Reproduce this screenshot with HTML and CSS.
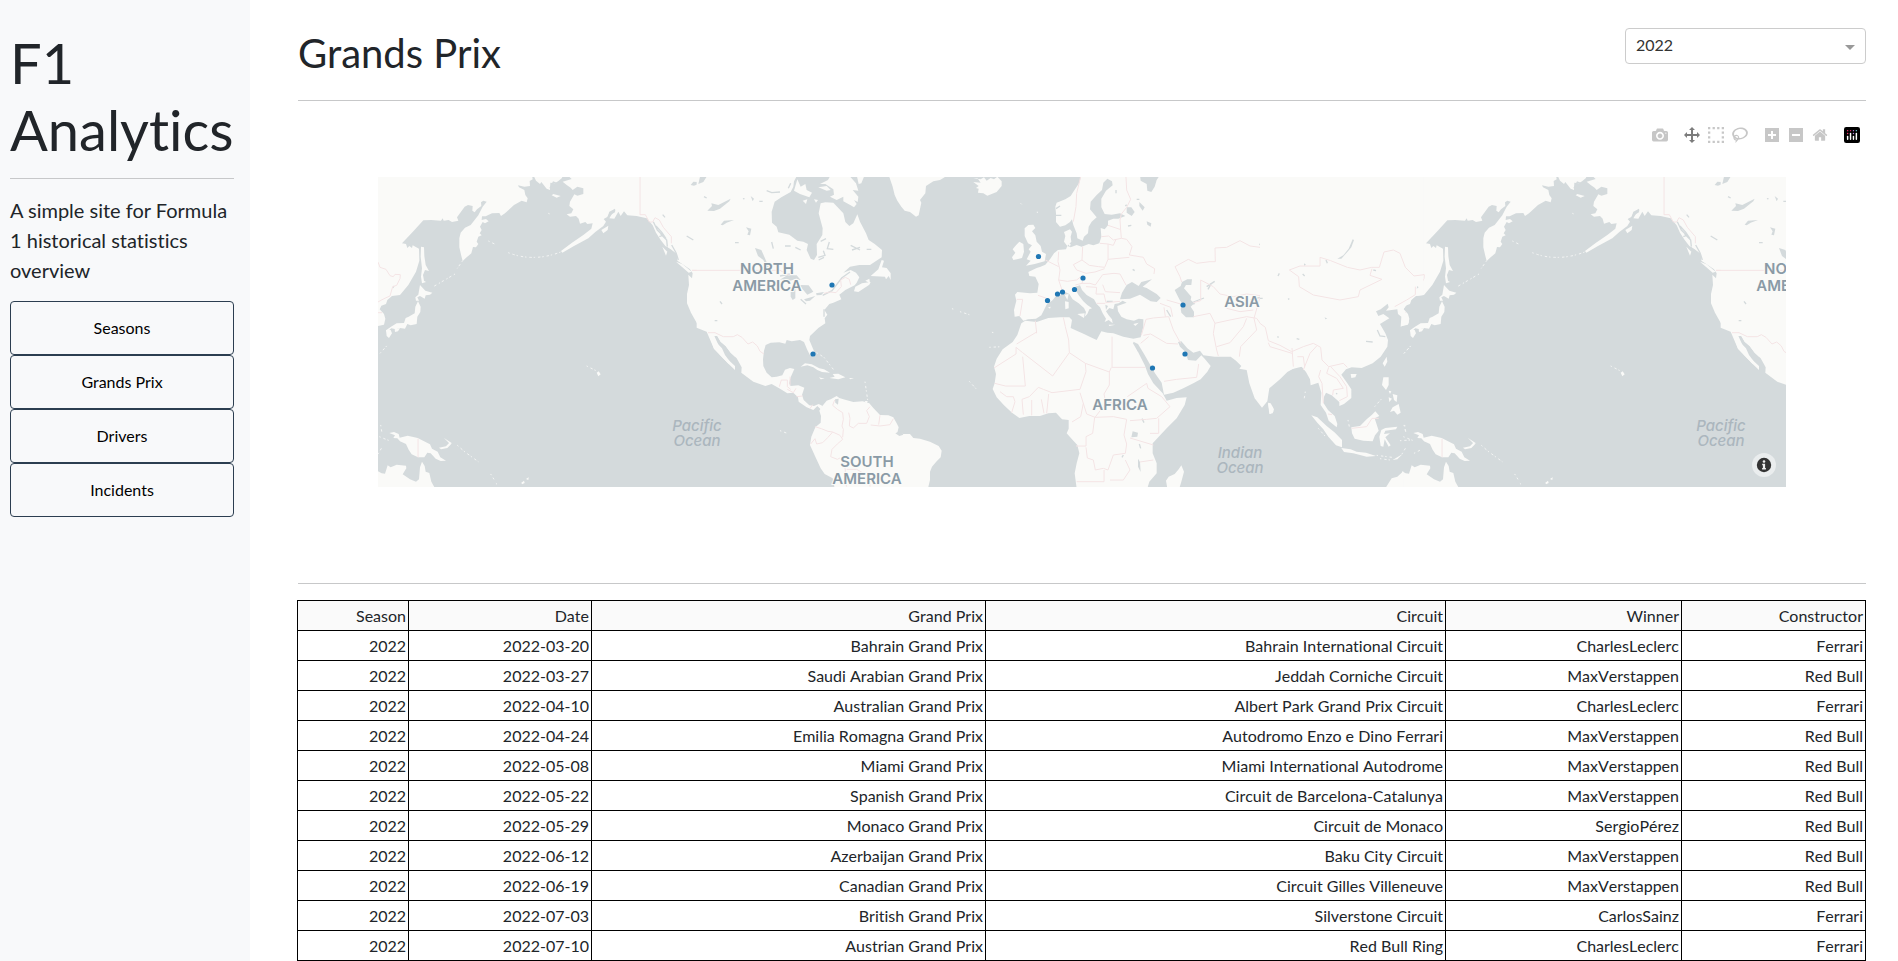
FILE: index.html
```html
<!DOCTYPE html>
<html lang="en">
<head>
<meta charset="utf-8">
<meta name="viewport" content="width=device-width, initial-scale=1">
<title>F1 Analytics</title>
<link rel="stylesheet" href="styles.css">
</head>
<body>
<div class="layout">
  <aside class="sidebar">
    <h1 class="brand">F1 Analytics</h1>
    <hr class="rule">
    <p class="lead">A simple site for Formula 1 historical statistics overview</p>
    <nav class="nav">
      <a class="nav-link" href="#seasons">Seasons</a>
      <a class="nav-link" href="#grands-prix">Grands Prix</a>
      <a class="nav-link" href="#drivers">Drivers</a>
      <a class="nav-link" href="#incidents">Incidents</a>
    </nav>
  </aside>
  <main class="content">
    <header class="page-head">
      <h2 class="page-title">Grands Prix</h2>
      <div class="picker">
        <select class="picker-select" aria-label="Season">
          <option>2022</option>
        </select>
        <span class="picker-arrow"></span>
      </div>
    </header>
    <hr class="rule">
    <section class="graph">
      <div class="modebar">
        <div class="modebar-group">
          <button class="tool" aria-label="Download plot"><svg viewBox="0 0 1000 1000"><path transform="matrix(1 0 0 -1 0 850)" d="m500 450c-83 0-150-67-150-150 0-83 67-150 150-150 83 0 150 67 150 150 0 83-67 150-150 150z m400 150h-120c-16 0-34 13-39 29l-31 93c-6 15-23 28-40 28h-340c-16 0-34-13-39-28l-31-94c-6-15-23-28-40-28h-120c-55 0-100-45-100-100v-450c0-55 45-100 100-100h800c55 0 100 45 100 100v450c0 55-45 100-100 100z m-400-550c-138 0-250 112-250 250 0 138 112 250 250 250 138 0 250-112 250-250 0-138-112-250-250-250z m365 380c-19 0-35 16-35 35 0 19 16 35 35 35 19 0 35-16 35-35 0-19-16-35-35-35z"/></svg></button>
        </div>
        <div class="modebar-group">
          <button class="tool tool-active" aria-label="Pan"><svg viewBox="0 0 1000 1000"><path transform="matrix(1 0 0 -1 0 850)" d="m1000 350l-187 188 0-125-250 0 0 250 125 0-188 187-187-187 125 0 0-250-250 0 0 125-188-188 186-187 0 125 252 0 0-250-125 0 187-188 188 188-125 0 0 250 250 0 0-126 187 188z"/></svg></button>
          <button class="tool" aria-label="Box select"><svg viewBox="0 0 1000 1000"><path transform="matrix(1 0 0 -1 0 850)" d="m0 850l0-143 143 0 0 143-143 0z m286 0l0-143 143 0 0 143-143 0z m285 0l0-143 143 0 0 143-143 0z m286 0l0-143 143 0 0 143-143 0z m-857-286l0-143 143 0 0 143-143 0z m857 0l0-143 143 0 0 143-143 0z m-857-285l0-143 143 0 0 143-143 0z m857 0l0-143 143 0 0 143-143 0z m-857-286l0-143 143 0 0 143-143 0z m286 0l0-143 143 0 0 143-143 0z m285 0l0-143 143 0 0 143-143 0z m286 0l0-143 143 0 0 143-143 0z"/></svg></button>
          <button class="tool" aria-label="Lasso select"><svg viewBox="0 0 1031 1000"><path transform="matrix(1 0 0 -1 0 850)" d="m1018 538c-36 207-290 336-568 286-277-48-473-256-436-463 10-57 36-108 76-151-13-66 11-137 68-183 34-28 75-41 114-42l-55-70 0 0c-2-1-3-2-4-3-10-14-8-34 5-45 14-11 34-8 45 4 1 1 2 3 2 5l0 0 113 140c16 11 31 24 45 40 4 3 6 7 8 11 48-3 100 0 151 9 278 48 473 255 436 462z m-624-379c-80 14-149 48-197 96 42 42 109 47 156 9 33-26 47-66 41-105z m-187-74c-19 16-33 37-39 60 50-32 109-55 174-68-42-25-95-24-135 8z m360 75c-34-7-69-9-102-8 8 62-16 128-68 170-73 59-175 54-244-5-9 20-16 40-20 61-28 159 121 317 333 354s407-60 434-217c28-159-121-318-333-355z"/></svg></button>
        </div>
        <div class="modebar-group">
          <button class="tool" aria-label="Zoom in"><svg viewBox="-62 0 1000 1000"><path transform="matrix(1 0 0 -1 0 850)" d="m1 787l0-875 875 0 0 875-875 0z m687-500l-187 0 0-187-125 0 0 187-188 0 0 125 188 0 0 187 125 0 0-187 187 0 0-125z"/></svg></button>
          <button class="tool" aria-label="Zoom out"><svg viewBox="-62 0 1000 1000"><path transform="matrix(1 0 0 -1 0 850)" d="m0 788l0-876 875 0 0 876-875 0z m688-500l-500 0 0 125 500 0 0-125z"/></svg></button>
          <button class="tool" aria-label="Reset view"><svg viewBox="-36 0 1000 1000"><path transform="matrix(1 0 0 -1 0 850)" d="m786 296v-267q0-15-11-26t-25-10h-214v214h-143v-214h-214q-15 0-25 10t-11 26v267q0 1 0 2t0 2l321 264 321-264q1-1 1-4z m124 39l-34-41q-5-5-12-6h-2q-7 0-12 3l-386 322-386-322q-7-4-13-4-7 2-12 7l-35 41q-4 5-3 13t6 12l401 334q18 15 42 15t43-15l136-114v109q0 8 5 13t13 5h107q8 0 13-5t5-13v-227l122-102q5-5 6-12t-4-13z"/></svg></button>
        </div>
        <div class="modebar-group">
          <a class="tool" href="#plotly" aria-label="Plotly"><svg viewBox="0 0 132 132"><rect width="132" height="132" rx="18" fill="#000"/><g fill="#fff"><rect x="24" y="72" width="12" height="36" rx="6"/><rect x="48" y="48" width="12" height="60" rx="6"/><rect x="72" y="72" width="12" height="36" rx="6"/><rect x="96" y="48" width="12" height="60" rx="6"/></g><g fill="#f0326e"><circle cx="30" cy="30" r="6"/><circle cx="30" cy="54" r="6"/><circle cx="54" cy="30" r="6"/></g><g fill="#b98ae0"><circle cx="78" cy="30" r="6"/><circle cx="78" cy="54" r="6"/></g><circle cx="102" cy="30" r="6" fill="#6dd5e0"/></svg></a>
        </div>
      </div>
      <div class="map">
        <svg class="map-canvas" viewBox="378 177 1408 310" preserveAspectRatio="xMidYMid slice" role="img" aria-label="Map of circuits">
          <defs>
            <g id="world">
              <!-- Pacific rim -->
              <g transform="translate(370 170) scale(.333333)">
                <g class="land">
                  <path d="M24,15L486,15 488,28 479,33 480,48 463,50 444,46 447,52 463,60 466,75 473,85 470,97 455,92 432,105 405,130 393,138 388,129 366,130 347,139 336,139 335,150 348,147 356,154 345,160 338,156 330,170 335,180 329,190 335,196 325,200 320,215 325,222 318,232 309,231 304,250 290,262 278,273 274,258 268,232 268,205 272,188 285,173 302,165 325,136 338,110 350,95 340,92 333,97 334,108 321,118 314,127 307,122 308,108 294,105 284,110 261,142 265,152 246,156 236,150 221,152 218,145 213,152 184,150 160,151 130,184 96,220 108,222 112,234 118,228 126,234 128,226 147,236 148,272 138,305 115,345 90,375 66,378 52,390 48,402 34,407 29,418 42,432 46,446 42,464 24,468Z"/>
                  <path d="M490,15L498,32 510,42 514,36 530,56 540,60 541,38 555,40 565,33 576,24 578,15Z"/>
                  <path d="M592,15L605,27 578,35 590,45 602,53 608,60 622,50 640,55 640,72 622,77 613,73 600,95 598,108 610,118 604,130 590,133 600,140 618,138 626,146 630,161 646,156 652,162 668,160 664,176 640,195 606,218 573,243 577,248 612,228 655,205 676,186 700,168 708,155 701,147 713,140 718,125 735,116 736,122 727,130 718,145 733,146 745,125 752,138 762,124 772,136 800,138 830,145 848,166 858,188 872,210 886,228 900,236 921,252 922,272 940,284 960,298 968,310 966,325 955,314 957,345 951,372 951,400 963,428 985,467 1010,479 1016,492 1032,536 1055,560 1076,582 1095,600 1095,15Z"/>
                  <path d="M153,230L162,232 163,258 167,285 177,303 165,300 159,315 162,332 168,336 156,340 153,320 156,295 152,260Z"/>
                  <path d="M150,345L166,362 187,368 180,374 167,376 164,386 150,378 142,382 147,392 138,392 136,382 145,374Z"/>
                  <path d="M144,394L152,410 151,426 142,440 140,462 122,466 112,462 105,476 90,474 78,478 64,475 50,487 48,481 63,470 80,460 102,459 107,444 116,440 134,430 136,410Z"/>
                  <path d="M48,480L62,480 66,490 57,504 50,498ZM74,478L90,474 84,484 75,486Z"/>
                  <path d="M58,789L72,786 86,792 89,803 113,797 143,804 180,823 186,836 203,845 211,862 228,872 212,873 197,866 182,850 172,848 163,862 144,862 125,853 116,839 108,822 90,814 82,805 70,804 75,796Z"/>
                  <path d="M207,833L228,829 240,816 243,823 232,834 213,838ZM222,804L246,820 240,822Z"/>
                  <path d="M24,904L35,910 45,911 53,886 62,892 80,884 108,887 109,895 98,913 120,928 138,935 147,928 150,892 156,875 164,888 167,905 178,909 184,935 195,955 24,955Z"/>
                  <path d="M877,230L892,245 888,257ZM918,275L938,283 965,305 956,308ZM694,180L715,167 713,180 700,190Z"/>
                  <path d="M545,76L550,72 572,78 560,83ZM680,608L686,604 692,613 685,619ZM454,938L462,932 464,939 456,943ZM468,927L476,922 475,930Z"/>
                </g>
                <path class="isles" d="M278,272L262,295M255,312L190,350M355,213L378,224M415,248Q490,278 575,245M262,826L285,846 325,875M362,912L372,928M378,940L386,948M650,588L678,602M30,550L50,528M32,765L36,790M28,800L58,812M24,852L36,832M535,130L545,134"/>
                <path class="water" d="M1033,498L1042,498 1052,515 1067,528 1082,548 1100,565 1115,590 1115,600 1095,588 1065,560 1050,535ZM1012,122L1026,108 1024,98 1045,104 1078,85 1075,96 1050,118 1030,122ZM962,45L970,35 980,36 992,22 1008,20 1003,35 985,42 972,47ZM1002,78L1010,80 1005,84ZM1048,392L1056,396 1054,402ZM1052,162L1072,150 1080,145 1064,165Z"/>
                <path class="creek" d="M710,158L716,136 735,124M850,155L862,180 878,196 868,200M858,168L876,188 888,206M872,192L890,210 892,230M905,225L918,248 925,270M890,232L905,250M950,198L970,210M878,134L885,142M540,55L550,36 560,40M1036,452L1042,452M68,354L72,348"/>
                <path class="border" d="M24,276L30,292 48,298 60,317 70,320 75,313 91,314 90,326 80,346 68,350 60,378 42,386 24,396M24,428L36,428M810,15V134L826,134 838,156 848,156 855,143 868,150 880,172 904,200 904,220M966,301H1100M144,806V862M1018,488L1032,488 1060,500 1100,500"/>
              </g>
              <!-- Americas, Greenland and Iceland -->
              <g transform="translate(700 170) scale(.333333)">
                <g class="land">
                  <path d="M-10,15L-10,473 20,485 42,536 65,560 86,582 90,575 75,555 66,535 50,518 42,498 52,498 62,515 77,528 92,548 110,565 125,592 124,608 160,635 196,648 215,642 240,656 262,670 280,668 294,682 296,695 320,712 340,720 352,708 362,718 368,708 356,702 342,708 328,706 311,690 306,675 313,653 295,646 272,648 267,640 272,622 283,597 270,594 255,599 247,616 230,620 215,622 200,608 190,588 189,568 192,542 197,525 212,518 238,517 256,521 260,510 275,514 300,510 312,516 322,540 330,556 342,560 344,548 328,510 330,498 355,474 376,460 374,445 382,434 373,420 388,402 400,398 424,388 418,374 436,360 464,346 470,338 478,322 468,308 452,300 430,308 450,290 478,285 510,285 545,262 546,240 524,222 506,210 498,190 480,155 472,133 460,160 448,168 436,156 430,130 400,98 376,97 362,100 356,130 368,175 367,195 350,222 351,255 342,270 332,266 320,240 324,222 310,215 292,212 268,194 235,187 230,170 216,158 215,125 224,95 244,82 272,66 280,50 282,34 292,15Z"/>
                  <path d="M292,28L302,50 316,42 320,60 336,68 328,82 300,72 282,62ZM308,92L322,88 318,102ZM342,88L354,90 348,98ZM355,52L380,48 392,60 380,62ZM392,15L384,30 360,42 376,42 400,58 402,74 390,80 410,90 430,80 430,94 452,106 462,112 470,102 462,90 473,96 475,80 458,60 475,62 468,40 446,15ZM470,15L476,42 484,40 494,15Z"/>
                  <path d="M545,270L535,298 512,318 555,320 558,328 566,318 572,330 572,310 560,294 546,292 552,272Z"/>
                  <path d="M466,350L486,340 512,336 508,344 475,366 462,364ZM496,332L508,326 510,340Z"/>
                  <path d="M566,15L578,50 584,75 592,92 604,110 614,122 630,126 648,140 656,136 664,98 660,90 676,70 678,48 700,34 720,30 745,15Z"/>
                  <path d="M820,24L832,24 842,38 820,36 836,48 828,54 836,56 834,68 850,70 862,77 890,66 905,48 905,34 892,20 882,28 872,24 860,32 852,22 842,28Z"/>
                  <path d="M302,590L315,580 335,583 358,595 372,598 390,608 366,606 352,600 340,592 322,586ZM398,612L415,611 436,622 415,628 388,624 404,620ZM357,622L374,626 362,628ZM448,624L462,625 450,628ZM494,693L503,693 500,702Z"/>
                  <path d="M364,712L380,692 392,688 410,678 418,684 430,688 460,696 488,694 508,700 520,714 540,735 565,736 580,742 590,760 596,772 592,788 610,792 630,792 640,804 660,806 690,815 716,828 725,842 722,862 710,874 696,890 690,905 690,930 684,955 404,955 398,925 374,912 362,895 346,860 330,825 334,800 346,772 362,758 363,738 358,722Z"/>
                </g>
                <path class="isles" d="M350,548L372,562 400,598M495,635L503,690M756,416L762,418M780,425L808,434M868,532L905,530M808,634L828,656M876,487L882,488M240,782L262,790M962,100L968,106M1012,125L1012,136"/>
                <g class="water">
                  <path d="M238,330L262,316 290,316 302,330 284,328 262,335 248,328ZM272,358L286,348 286,385 278,390 272,380ZM300,345L326,346 340,365 322,374 308,358ZM312,388L346,378 330,392 318,394ZM348,370L372,366 364,375 350,376ZM165,234L184,240 192,258 206,290 200,292 190,270 174,258ZM22,122L36,108 34,100 55,105 92,86 88,94 60,116 42,123ZM62,164L72,152 102,150 80,158 68,166ZM138,172L154,176 150,196 142,194 146,184ZM152,78L162,86 158,94ZM405,688L416,686 414,704 406,698ZM0,20H20L10,36 -5,42ZM586,790L602,782 610,794 598,798ZM128,84L134,84 132,90ZM178,92H188V96H178Z"/>
                </g>
                <path class="creek" d="M12,80L20,84M200,62L215,68 240,66M105,218H116M215,216L220,236M255,228L272,228M286,232L302,240M355,262L375,256 370,242M362,214L378,206M388,216L382,236 400,238M452,226L480,240M456,240L480,232M60,394L66,402M44,452H52M368,376L396,362 425,324 450,306M372,418V440M500,238H514M265,55L272,40M356,270L372,262M240,318L270,312M302,388L318,402"/>
                <path class="border" d="M-24,301H240L268,316M372,370L390,366 408,368 424,350 422,330 436,322 448,328 452,344M24,488L45,488 70,500 100,500 112,494 126,502 144,522 158,516 172,528 180,544 192,552M238,650L244,630 262,630 262,650 272,658M270,620V646M262,658L280,668 288,655M290,680L308,678M338,704L330,716M404,690L398,706 412,718 428,728 430,748 426,768 430,778 428,802M446,728L450,745 448,768 460,774 475,760 500,760 508,740 500,722 510,710M512,765L540,768 570,764 580,746M540,736L536,764M345,770L364,776 384,784 398,786 384,802 368,818 350,822 345,806 332,822M398,786L420,796 428,808 412,822 396,838 392,860 412,868 420,864M430,870L436,900 434,930 440,950M440,898L470,898 508,920 510,950"/>
              </g>
            </g>
          </defs>
          <rect x="378" y="177" width="1408" height="310" fill="#d4dadc"/>
          <use href="#world"/>
          <use href="#world" x="1024"/>
          <!-- Europe, Africa, western and southern Asia -->
          <g transform="translate(980 170) scale(.333333)">
            <g class="land">
              <path d="M304,15L298,38 285,58 272,78 256,88 230,98 226,110 228,130 228,156 240,170 256,166 270,156 276,148 280,165 290,190 292,205 308,212 312,200 324,190 326,170 335,155 350,142 340,130 330,118 332,95 350,75 366,60 370,38 382,26 396,34 398,46 378,62 364,86 364,112 374,132 395,134 420,130 436,138 415,146 400,146 384,152 384,166 374,178 362,174 364,200 358,220 340,226 326,222 305,230 290,225 272,232 262,228 252,215 256,198 252,186 270,178 276,185 272,200 274,215 262,228 258,238 234,240 222,250 210,268 196,284 182,290 170,294 145,306 148,318 166,320 176,342 172,368 150,370 112,366 105,374 109,392 102,420 104,440 118,438 130,452 144,448 168,446 184,436 192,420 202,400 216,392 228,378 242,376 256,366 268,372 278,388 296,400 312,414 318,426 314,440 322,432 328,418 336,415 322,405 310,394 296,376 288,362 286,350 300,346 306,360 320,375 342,388 350,402 360,412 368,430 378,446 374,456 386,450 398,460 396,448 386,436 378,424 388,414 400,418 404,402 416,400 428,392 440,398 412,408 414,424 424,440 440,448 462,452 476,446 490,448 490,470 482,502 460,506 430,500 400,490 382,488 364,484 350,510 332,502 312,492 290,482 272,474 276,450 268,442 240,442 205,444 170,456 136,452 124,460 112,495 98,516 68,538 50,566 42,590 48,612 44,640 38,657 50,682 72,706 96,728 118,744 148,738 180,738 205,730 228,728 246,748 266,750 266,776 260,790 276,808 292,825 298,850 290,880 284,910 290,955 502,955 508,935 530,910 530,880 518,850 518,820 560,775 590,745 614,705 620,682 590,684 560,692 548,670 520,640 504,612 494,585 476,550 464,524 460,515 474,522 494,555 508,580 525,610 545,638 552,674 580,668 610,655 640,640 662,628 682,605 692,588 674,566 664,556 648,572 624,570 616,545 600,530 594,516 604,514 622,535 640,548 660,542 670,556 704,560 752,560 768,572 784,588 778,596 800,600 808,640 824,685 846,713 862,694 868,655 900,628 922,606 950,590 970,590 970,15Z"/>
              <path d="M145,165L160,164 166,174 156,184 166,196 170,215 182,228 186,245 198,252 194,274 164,282 138,287 152,272 140,268 152,245 146,238 156,226 144,220 134,198 134,175ZM104,230L118,215 130,222 132,245 126,264 100,270 96,262 106,248 98,238ZM254,374L266,372 262,390ZM255,394L266,396 266,415 256,418ZM292,432L314,430 312,444ZM386,464L406,464 388,468ZM460,462L476,458 466,468ZM204,412L212,410 210,416ZM262,218L272,222 270,230Z"/>
              <path d="M864,698L872,700 882,718 878,730 868,732ZM604,886L612,905 604,935 598,955 562,955 558,932 566,920 584,912 596,898Z"/>
            </g>
            <g class="water">
              <path d="M456,336L440,345 426,368 420,388 450,386 480,374 512,394 530,396 542,384 530,372 500,354 488,350 516,328 484,336 476,348ZM606,336L622,328 636,328 634,345 618,345 612,355 634,380 632,390 646,402 638,404 632,410 642,425 642,442 618,442 604,428 602,416 608,405 598,388 584,360 602,348ZM480,15L482,32 500,42 502,62 514,66 524,50 530,30 540,15ZM440,112L454,112 464,126 455,138 440,128ZM478,96L494,112 488,122 478,108ZM500,154L514,160 512,170 502,164ZM458,784L474,788 472,800 454,802ZM474,866L480,876 482,906 474,890ZM376,404L384,408 378,420ZM600,205Z"/>
            </g>
            <path class="creek" d="M560,420L572,440M680,350L704,334M684,358L694,340M896,296L912,308M838,224L850,218M886,342L898,336M840,382L812,390M478,822L482,835M430,855L426,862M458,298L464,302M640,396L672,384M486,746L492,758M380,394H398M240,108L228,116M226,136L244,136M968,285L980,280M1036,442L1042,444M460,518L476,545M436,108L440,104M408,60V70M470,88H478M444,168L454,166"/>
            <path class="border" d="M302,20L290,70 288,110 280,155M438,20L440,60 452,88 440,112 424,132 420,150 422,180 424,205 440,208 456,230 448,255 490,262 500,282 524,296 522,312M384,166L420,178M364,200L386,198 400,210 424,205M308,230L306,270 328,286 356,290 374,292 384,268 384,222 360,220M384,222L400,226 408,208M384,268L448,262M306,270L280,284 290,300 318,310 345,306 374,296M236,245L234,275 240,300 236,330 262,334 290,330 300,322M196,270L236,290M236,330L246,360M286,345L306,340 312,318M306,340L330,340 346,345 368,314 402,310 420,312 438,345M318,350L350,352 348,372 372,372 378,398 420,394M368,344L376,365 420,368M350,400L376,400M200,385L174,376M110,388H128L120,438M250,442L256,470 266,510 268,548 218,618 128,548 108,532 108,552 42,594M166,452L170,490M170,486L110,522M128,560L136,648H76L44,640M268,548L316,580 318,605 300,658 216,668 190,658 175,652 148,680 126,688 130,734M396,500V592H496M388,605V645L372,672 378,700 345,742 320,732 300,668M394,592L388,606 316,580M60,665L80,680 100,680 105,695 95,728M155,690V736M184,688L192,730M206,672L200,730M310,700L302,740 276,756M344,742L338,790 318,800 318,828H288M345,742L400,740 440,748 432,795 440,822 436,850 400,855 384,900 370,895 346,900 340,870 322,864 318,832M378,700L400,698 M442,680L500,640 504,655 545,680 570,710 530,745 500,748 450,752M536,745V790L510,790M450,804L520,825M372,900V935L290,935M436,870L450,900 430,930 390,930M480,876L520,870M484,496L498,448 520,444 566,440 580,480 602,520M490,496L512,492 560,520 594,522M506,500L482,520M540,400L572,412 578,440M556,440L552,412M560,390L602,402M640,440L690,430 705,460 700,490 710,540 715,558M640,398L662,392V330L700,350 720,372 760,380 800,372 866,380M704,460L750,450 800,440 830,445 862,490 860,515 920,545 1000,540M778,560L782,530 830,480 822,445 840,382 870,378 870,350 900,325 930,300 900,280 868,270 840,232 810,228 780,212 740,232 705,234 706,275 690,275 650,280 625,268 585,290 600,320 605,336M930,300L1010,290 1030,262 1080,280M930,300L960,320 960,350 1000,375 1080,392M710,530L750,518 790,470 800,445M740,415L780,425 820,420M552,634L590,628 650,622 656,582M936,540L940,590M960,560L1000,520 1020,540"/>
          </g>
          <!-- Eastern Asia and the Indonesian islands -->
          <g transform="translate(1260 170) scale(.333333)">
            <g class="land">
              <path d="M0,15L0,650 30,645 52,625 85,600 125,590 138,606 150,628 152,646 175,638 184,668 182,705 198,728 206,752 230,772 232,762 224,738 204,720 190,698 192,680 198,668 215,676 238,696 238,708 252,702 274,684 274,658 262,640 244,614 258,598 275,592 305,594 338,580 362,560 382,530 384,510 376,490 360,462 388,445 370,432 355,438 348,424 362,418 383,401 386,412 378,422 412,418 414,432 424,440 422,470 446,460 447,444 430,418 440,405 452,390 466,378 490,375 490,15Z"/>
              <path d="M272,612L290,612 286,622 274,624ZM380,560L382,575 374,590 368,580ZM370,622L386,622 386,645 378,660 366,645ZM398,712L416,702 422,728 412,734 402,722 390,726ZM154,736L172,742 200,768 225,788 246,810 246,832 228,826 205,800 190,778 172,758ZM244,834L272,838 290,845 318,848 348,858 320,860 280,850 252,846ZM274,772L300,768 320,748 336,734 346,724 358,738 344,745 356,782 345,796 338,814 310,812 284,806 276,790ZM364,780L376,774 412,770 408,778 376,782 372,792 390,790 376,802 392,826 386,830 374,808 370,830 362,828 358,800ZM24,700L38,712 40,725 30,732ZM376,955L395,925 412,920 430,904 430,955Z"/>
              <path d="M386,662L394,664 390,672ZM398,672L412,676 410,696 402,690ZM386,682L396,686 388,696ZM398,870L428,852 412,868Z"/>
            </g>
            <path class="isles" d="M344,710L366,685M350,856L396,862M360,866L390,870M420,812L454,810M432,765L438,790M136,665L132,690M175,775L200,804M432,550L450,530M462,850L485,838M264,750L268,770"/>
            <path class="water" d="M278,208L282,210 274,232 262,246 244,266 232,266 250,256 266,236ZM194,442L202,446 196,448ZM472,348L476,352 470,356ZM132,280L138,284 132,288Z"/>
            <path class="creek" d="M340,300L348,302M198,270L202,280M128,312L134,318M110,506L118,508M52,500L56,502M352,480L360,498 376,500M318,514L338,516M228,670L232,672M58,310L54,318M0,385H8M84,388L88,386"/>
            <path class="border" d="M88,300L120,288 180,288 180,262 212,272 262,292 300,300 335,292 358,292 372,246 400,240 420,250 436,292 462,318 492,314M88,300L116,320 118,350 160,375 240,390 295,380 300,360 366,328 330,316 336,296M404,410L440,390 466,374 466,350M0,460L16,472 25,512 60,526 95,545 130,530 160,520 182,532 186,570 206,590 250,580 262,592M25,518L30,530 96,550M96,534L100,590M112,560L130,560 134,592M130,600L150,550 170,528M182,600L176,620 186,640 190,700M206,592L200,610 230,625 250,655 220,660 218,676M212,590L240,620 260,650 262,680 238,692M275,775L320,770 336,745 356,745M204,732L216,734"/>
          </g>
          <g class="place">
            <text x="767" y="274">NORTH</text><text x="767" y="291">AMERICA</text>
            <text x="1791" y="274">NORTH</text><text x="1791" y="291">AMERICA</text>
            <text x="867" y="467">SOUTH</text><text x="867" y="484">AMERICA</text>
            <text x="1120" y="410">AFRICA</text><text x="1242" y="307">ASIA</text>
          </g>
          <g class="ocean">
            <text x="697" y="431">Pacific</text><text x="697" y="446">Ocean</text>
            <text x="1721" y="431">Pacific</text><text x="1721" y="446">Ocean</text>
            <text x="1240" y="458">Indian</text><text x="1240" y="473">Ocean</text>
          </g>
          <g fill="#1f77b4">
            <circle cx="832" cy="285" r="2.6"/><circle cx="813" cy="354" r="2.6"/><circle cx="1038.500" cy="256.500" r="2.6"/>
            <circle cx="1083" cy="278" r="2.6"/><circle cx="1047.500" cy="300.500" r="2.6"/><circle cx="1057.500" cy="294" r="2.6"/>
            <circle cx="1062.500" cy="292" r="2.6"/><circle cx="1074.500" cy="289.500" r="2.6"/><circle cx="1183" cy="305" r="2.6"/>
            <circle cx="1185" cy="354" r="2.6"/><circle cx="1152.500" cy="368" r="2.6"/>
          </g>
        </svg>
        <button class="map-info" aria-label="Map attribution"><svg viewBox="0 0 24 24"><circle cx="12" cy="12" r="7.200" fill="#333"/><circle cx="12" cy="8.500" r="1.300" fill="#eee"/><path d="M10.200 10.800h2.900v4.200h.8v1.400h-3.800V15h.8v-2.800h-.7z" fill="#eee"/></svg></button>
      </div>
    </section>
    <hr class="rule">
    <table class="results">
      <colgroup><col class="c-season"><col class="c-date"><col class="c-gp"><col class="c-circuit"><col class="c-winner"><col class="c-team"></colgroup>
      <thead><tr><th>Season</th><th>Date</th><th>Grand Prix</th><th>Circuit</th><th>Winner</th><th>Constructor</th></tr></thead>
      <tbody>
        <tr><td>2022</td><td>2022-03-20</td><td>Bahrain Grand Prix</td><td>Bahrain International Circuit</td><td>CharlesLeclerc</td><td>Ferrari</td></tr>
        <tr><td>2022</td><td>2022-03-27</td><td>Saudi Arabian Grand Prix</td><td>Jeddah Corniche Circuit</td><td>MaxVerstappen</td><td>Red Bull</td></tr>
        <tr><td>2022</td><td>2022-04-10</td><td>Australian Grand Prix</td><td>Albert Park Grand Prix Circuit</td><td>CharlesLeclerc</td><td>Ferrari</td></tr>
        <tr><td>2022</td><td>2022-04-24</td><td>Emilia Romagna Grand Prix</td><td>Autodromo Enzo e Dino Ferrari</td><td>MaxVerstappen</td><td>Red Bull</td></tr>
        <tr><td>2022</td><td>2022-05-08</td><td>Miami Grand Prix</td><td>Miami International Autodrome</td><td>MaxVerstappen</td><td>Red Bull</td></tr>
        <tr><td>2022</td><td>2022-05-22</td><td>Spanish Grand Prix</td><td>Circuit de Barcelona-Catalunya</td><td>MaxVerstappen</td><td>Red Bull</td></tr>
        <tr><td>2022</td><td>2022-05-29</td><td>Monaco Grand Prix</td><td>Circuit de Monaco</td><td>SergioPérez</td><td>Red Bull</td></tr>
        <tr><td>2022</td><td>2022-06-12</td><td>Azerbaijan Grand Prix</td><td>Baku City Circuit</td><td>MaxVerstappen</td><td>Red Bull</td></tr>
        <tr><td>2022</td><td>2022-06-19</td><td>Canadian Grand Prix</td><td>Circuit Gilles Villeneuve</td><td>MaxVerstappen</td><td>Red Bull</td></tr>
        <tr><td>2022</td><td>2022-07-03</td><td>British Grand Prix</td><td>Silverstone Circuit</td><td>CarlosSainz</td><td>Ferrari</td></tr>
        <tr><td>2022</td><td>2022-07-10</td><td>Austrian Grand Prix</td><td>Red Bull Ring</td><td>CharlesLeclerc</td><td>Ferrari</td></tr>
      </tbody>
    </table>
  </main>
</div>
</body>
</html>
```
FILE: styles.css
```css
* {
  box-sizing: border-box;
}

body {
  margin: 0;
  font: 400 16px/24px Lato, sans-serif;
  font-variant-ligatures: none;
  color: #212529;
  background: #fff;
}

.layout {
  display: grid;
  grid-template-columns: 250px minmax(0, 1fr);
  min-height: 100vh;
}

.sidebar {
  padding: 29px 16px 0 10px;
  background: #f8f9fa;
}

.brand {
  margin: 0;
  font-size: 56px;
  font-weight: 400;
  line-height: 67px;
}

.rule {
  height: 1px;
  margin: 16px 0;
  border: 0;
  background: #c7c8c9;
}

.brand + .rule {
  margin-top: 15px;
}

.lead {
  margin: 0 0 16px;
  font-size: 20px;
  line-height: 30px;
}

.nav {
  display: flex;
  flex-direction: column;
}

.nav-link {
  padding: 14px;
  border: 1px solid #2c3e50;
  border-radius: 4px;
  color: #000;
  text-align: center;
  text-decoration: none;
}

.content {
  padding: 28px 32px 0 48px;
}

.page-head {
  display: flex;
  justify-content: space-between;
  align-items: flex-start;
  padding-bottom: 6px;
}

.page-title {
  margin: 0;
  font-size: 40px;
  font-weight: 400;
  line-height: 50px;
}

.picker {
  position: relative;
  width: 241px;
}

.picker-select {
  display: block;
  width: 100%;
  height: 36px;
  padding: 0 10px 2px;
  border: 1px solid #ccc;
  border-radius: 4px;
  appearance: none;
  background: #fff;
  color: #333;
  font: inherit;
}

.picker-arrow {
  position: absolute;
  top: 17px;
  right: 11px;
  border: 5px solid transparent;
  border-top-color: #999;
  border-bottom: 0;
  pointer-events: none;
}

.graph {
  padding: 10px 0 80px;
}

.modebar {
  display: flex;
  justify-content: flex-end;
  gap: 16px;
  padding: 0 6px 34px 0;
}

.modebar-group {
  display: flex;
  gap: 8px;
}

.tool {
  width: 16px;
  height: 16px;
  padding: 0;
  border: 0;
  background: none;
  fill: #c7c7c7;
}

.tool svg {
  display: block;
  width: 16px;
  height: 16px;
}

.tool-active {
  fill: #7c7c7c;
}

.map {
  position: relative;
  height: 310px;
  margin: 0 80px;
}

.map-canvas {
  display: block;
  width: 100%;
  height: 100%;
}

.land {
  fill: #fafaf8;
}

.water {
  fill: #d4dadc;
}

.creek {
  fill: none;
  stroke: #d4dadc;
  stroke-width: 4;
}

.isles {
  fill: none;
  stroke: #f4f5f4;
  stroke-width: 3;
  stroke-dasharray: 4 9 7 6;
}

.border {
  fill: none;
  stroke: #f4e4e5;
  stroke-width: 3;
  stroke-linejoin: round;
}

.place {
  fill: #8a9aa6;
  stroke: #fafaf8;
  stroke-width: 2;
  paint-order: stroke;
  font: 600 15px Inter, sans-serif;
  text-anchor: middle;
}

.ocean {
  fill: #abb6be;
  font: italic 500 15px Inter, sans-serif;
  text-anchor: middle;
}

.map-info {
  position: absolute;
  right: 10px;
  bottom: 10px;
  width: 24px;
  height: 24px;
  padding: 0;
  border: 0;
  border-radius: 50%;
  background: rgba(255, 255, 255, 0.5);
}

.map-info svg {
  display: block;
}

.results {
  width: calc(100% + 1px);
  margin-left: -1px;
  table-layout: fixed;
  border-collapse: collapse;
  text-align: right;
  font-kerning: none;
}

.results th,
.results td {
  height: 30px;
  padding: 0 2px;
  border: 1px solid #000;
  font-weight: 400;
  white-space: nowrap;
}

.results th {
  background: #fafafa;
}

.c-season {
  width: 111px;
}

.c-date {
  width: 183px;
}

.c-gp {
  width: 394px;
}

.c-circuit {
  width: 460px;
}

.c-winner {
  width: 236px;
}

.c-team {
  width: 184px;
}
```
